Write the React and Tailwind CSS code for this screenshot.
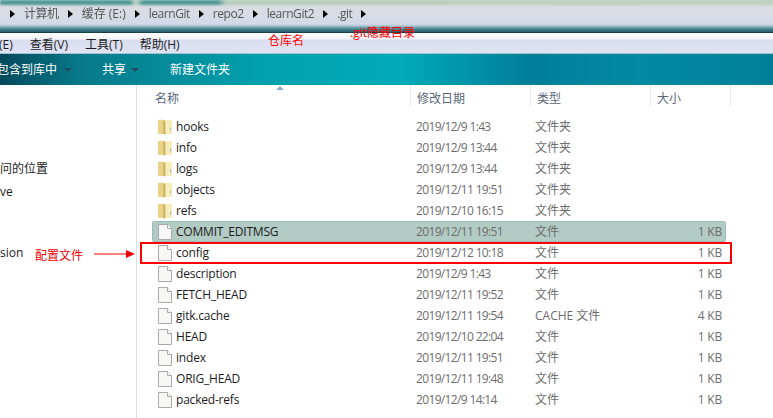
import React from 'react';

const folders = [
  ['hooks', '2019/12/9 1:43'],
  ['info', '2019/12/9 13:44'],
  ['logs', '2019/12/9 13:44'],
  ['objects', '2019/12/11 19:51'],
  ['refs', '2019/12/10 16:15'],
];

const files = [
  ['COMMIT_EDITMSG', '2019/12/11 19:51', '文件', '1 KB'],
  ['config', '2019/12/12 10:18', '文件', '1 KB'],
  ['description', '2019/12/9 1:43', '文件', '1 KB'],
  ['FETCH_HEAD', '2019/12/11 19:52', '文件', '1 KB'],
  ['gitk.cache', '2019/12/11 19:54', 'CACHE 文件', '4 KB'],
  ['HEAD', '2019/12/10 22:04', '文件', '1 KB'],
  ['index', '2019/12/11 19:51', '文件', '1 KB'],
  ['ORIG_HEAD', '2019/12/11 19:48', '文件', '1 KB'],
  ['packed-refs', '2019/12/9 14:14', '文件', '1 KB'],
];

const crumbs = ['计算机', '缓存 (E:)', 'learnGit', 'repo2', 'learnGit2', '.git'];

const FolderIcon = () => (
  <svg width="16" height="16" viewBox="0 0 16 16" className="shrink-0">
    <path d="M1 1.5a.8.8 0 0 1 .8-.8h4.4V15H1.8a.8.8 0 0 1-.8-.8z" fill="#e9d38b" />
    <path d="M6.2 1H14.2a.8.8 0 0 1 .8.8V15H6.2z" fill="#f8edb9" />
    <path d="M6 .7l2.8 1.6V15.3H6z" fill="#d5b962" />
    <path d="M8.8 2.3h1.2V15H8.8z" fill="#fbf4d2" />
    <path d="M13 8.5h1v3h-1z" fill="#8fbcd8" />
  </svg>
);

const FileIcon = () => (
  <svg width="14" height="16" viewBox="0 0 14 16" className="shrink-0">
    <path d="M.5.5h9l4 4v11H.5z" fill="#f7f7f5" stroke="#a9a9a9" />
    <path d="M9.5.5v4h4" fill="#fff" stroke="#a9a9a9" />
  </svg>
);

const Row = ({ icon, name, date, type, size, selected }) => (
  <div
    className={`flex h-[21px] items-center rounded-[2px] border ${selected ? 'border-[#98c0b6] bg-[#b2cbc4]' : 'border-transparent'}`}
  >
    <div className="flex w-[263px] items-center gap-[3px] pl-[3px]">
      <div className="flex w-[17px] justify-center">{icon}</div>
      <span className="text-[12px] tracking-[-0.2px] text-[#1c1c1c]">{name}</span>
    </div>
    <div className="w-[119px] text-[12px] tracking-[-0.65px] text-[#6d6d6d]">{date}</div>
    <div className="w-[100px] text-[12px] text-[#6d6d6d]">{type}</div>
    <div className="w-[87px] text-right text-[12px] tracking-[-0.2px] text-[#6d6d6d]">{size}</div>
  </div>
);

export default function App() {
  return (
    <div className="relative flex h-[418px] w-[773px] flex-col overflow-hidden bg-white font-['Open_Sans','Noto_Sans_CJK_SC',sans-serif]">
      {/* address bar */}
      <div className="h-[32px] bg-[linear-gradient(#d4d9df_0px,#dadde2_8px,#d3d9e7_24px,#a8c4cc_26px,#5b95a2_28px,#2f6370_31px)]">
        <div className="h-[5px] bg-[linear-gradient(90deg,#4f9a96_0px,#4f9a96_130px,#c6d4c6_136px,#4f9a96_143px,#4f9a96_218px,#b9cfbd_226px,#bcd1bd_773px)] blur-[1px]" />
        <div className="flex h-[18px] items-center gap-[9px] pl-[10px] blur-[0.4px]">
          {crumbs.map((c) => (
            <React.Fragment key={c}>
              <span className="h-0 w-0 border-y-[4px] border-l-[5px] border-y-transparent border-l-black" />
              <span className={`text-[12px] text-[#555] ${c.includes('缓') ? '' : 'tracking-[-0.45px]'}`}>{c}</span>
            </React.Fragment>
          ))}
          <span className="h-0 w-0 border-y-[4px] border-l-[5px] border-y-transparent border-l-black" />
        </div>
      </div>

      {/* menu */}
      <div className="flex h-[22px] items-center gap-[17px] border-t border-[#17404c] border-b border-b-[#a3c3d0] bg-[linear-gradient(#ffffff_0px,#f3f4fb_6px,#d9deef_7px,#dfe3f3_100%)] pt-[4px] text-[12px] text-[#1c1c1c]">
        <span className="-ml-[1px]">(E)</span>
        <span>查看(V)</span>
        <span>工具(T)</span>
        <span>帮助(H)</span>
      </div>

      {/* toolbar */}
      <div className="flex h-[31px] items-center bg-[linear-gradient(90deg,#044a5c_0px,#07798a_80px,#02a0ad_260px,#00abb8_400px,#017e99_530px,#028aa3_640px,#027f98_773px)] text-[12px] text-white">
        <span className="-ml-[3px] w-[67px] shrink-0">包含到库中</span>
        <span className="h-0 w-0 border-x-[4px] border-t-[4px] border-x-transparent border-t-[#1c4d63]" />
        <span className="ml-[30px]">共享</span>
        <span className="ml-[5px] h-0 w-0 border-x-[4px] border-t-[4px] border-x-transparent border-t-[#1c4d63]" />
        <span className="ml-[31px]">新建文件夹</span>
      </div>

      <div className="flex flex-1">
        {/* nav pane */}
        <div className="flex w-[137px] shrink-0 flex-col border-r border-[#d3e2ef] pt-[75px] text-[12px] text-[#1c1c1c]">
          <div className="h-[21px]">问的位置</div>
          <div className="h-[63px] leading-[21px]">ve</div>
          <div>sion</div>
        </div>

        {/* file list */}
        <div className="flex-1">
          <div className="relative flex h-[21px] text-[12px] text-[#5a6779]">
            <div className="h-full w-[274px] border-r border-[#e3ecf4] pl-[18px] pt-[5px]">名称</div>
            <div className="h-full w-[120px] border-r border-[#e3ecf4] pl-[6px] pt-[5px]">修改日期</div>
            <div className="h-full w-[120px] border-r border-[#e3ecf4] pl-[6px] pt-[5px]">类型</div>
            <div className="h-full w-[80px] border-r border-[#e3ecf4] pl-[6px] pt-[5px]">大小</div>
            <span className="absolute left-[139px] top-[1px] h-0 w-0 border-x-[4px] border-b-[4px] border-x-transparent border-b-[#90aec5]" />
          </div>
          <div className="ml-[15px] w-[574px] pt-[10px]">
            {folders.map(([name, date]) => (
              <Row key={name} icon={<FolderIcon />} name={name} date={date} type="文件夹" size="" />
            ))}
            {files.map(([name, date, type, size], i) => (
              <Row key={name} icon={<FileIcon />} name={name} date={date} type={type} size={size} selected={i === 0} />
            ))}
          </div>
        </div>
      </div>

      {/* red annotations */}
      <span className="absolute left-[268px] top-[32px] text-[12px] text-[#f00]">仓库名</span>
      <span className="absolute left-[350px] top-[24px] text-[12px] text-[#f00]">.git隐藏目录</span>
      <span className="absolute left-[35px] top-[247px] text-[12px] text-[#e00]">配置文件</span>
      <svg className="absolute left-[94px] top-[249px]" width="42" height="10" viewBox="0 0 42 10">
        <path d="M0 5h33" stroke="#f00" strokeWidth="1" />
        <path d="M32 1l9 4-9 4z" fill="#e00" />
      </svg>
      <div className="absolute left-[140px] top-[242px] h-[22px] w-[592px] border-2 border-[#f00]" />
    </div>
  );
}
